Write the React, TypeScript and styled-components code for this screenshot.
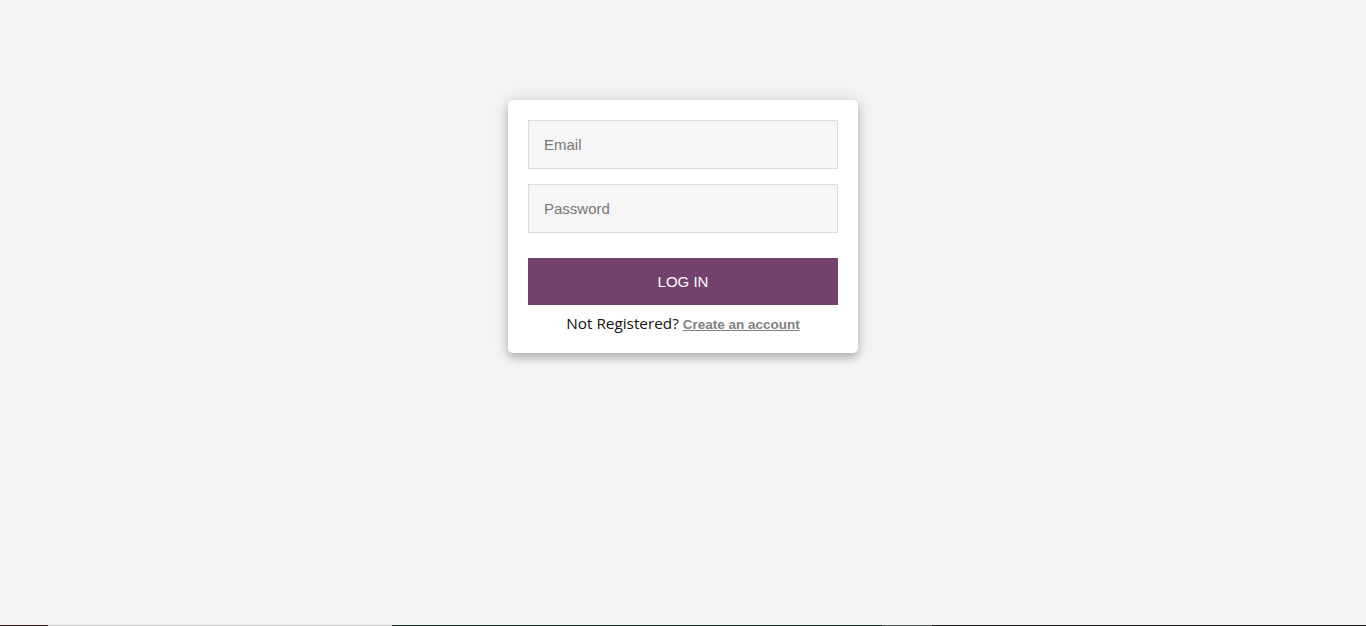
import React from "react";
import styled, { createGlobalStyle } from "styled-components";

const Global = createGlobalStyle`
  html, body { margin: 0; padding: 0; background: #f3f4f6; }
  #root { min-height: 100vh; }
  * { box-sizing: border-box; }
`;

const Page = styled.div`
  min-height: 100vh;
  display: flex;
  flex-direction: column;
`;

const Main = styled.main`
  flex: 1;
  display: flex;
  justify-content: center;
  align-items: flex-start;
  padding-top: 100px;
`;

const Card = styled.form`
  width: 350px;
  background: #ffffff;
  border-radius: 5px;
  padding: 20px 20px 20px;
  box-shadow: 0 0 18px rgba(0, 0, 0, 0.12), 0 5px 8px rgba(0, 0, 0, 0.22);
  display: flex;
  flex-direction: column;
`;

const Field = styled.input<{ $gap: number }>`
  width: 100%;
  height: 49px;
  margin: 0 0 ${(p) => p.$gap}px;
  padding: 0 15px;
  background: #f6f6f6;
  border: 1px solid #dcdcdc;
  font-family: "Liberation Sans", Arial, sans-serif;
  font-size: 15px;
  color: #333;
  outline: none;
  &::placeholder { color: #777; }
`;

const Button = styled.button`
  width: 100%;
  height: 47px;
  border: 0;
  background: #73416d;
  color: #ffffff;
  font-family: "Liberation Sans", Arial, sans-serif;
  font-size: 15px;
  text-transform: uppercase;
  cursor: pointer;
`;

const Message = styled.p`
  margin: 8px 0 0;
  height: 20px;
  line-height: 20px;
  text-align: center;
  font-family: "Open Sans", "Noto Sans", sans-serif;
  font-size: 15.3px;
  color: #111;
`;

const Link = styled.a`
  font-family: "Liberation Sans", Arial, sans-serif;
  font-weight: 700;
  font-size: 13.5px;
  line-height: 1;
  color: #808080;
  text-decoration: underline;
`;

const Strip = styled.div`
  height: 1px;
  display: grid;
  grid-template-columns: 48px 344px 490px 50px 1fr;
`;

const Seg = styled.span<{ $c: string }>`
  background: ${(p) => p.$c};
`;

export default function App() {
  return (
    <Page>
      <Global />
      <Main>
        <Card onSubmit={(e) => e.preventDefault()}>
          <Field $gap={15} type="text" placeholder="Email" />
          <Field $gap={25} type="password" placeholder="Password" />
          <Button type="submit">Log in</Button>
          <Message>
            Not Registered? <Link href="#">Create an account</Link>
          </Message>
        </Card>
      </Main>
      <Strip>
        <Seg $c="#2a2020" />
        <Seg $c="#c4c4c4" />
        <Seg $c="#1f2727" />
        <Seg $c="#5a5f5f" />
        <Seg $c="#222222" />
      </Strip>
    </Page>
  );
}
